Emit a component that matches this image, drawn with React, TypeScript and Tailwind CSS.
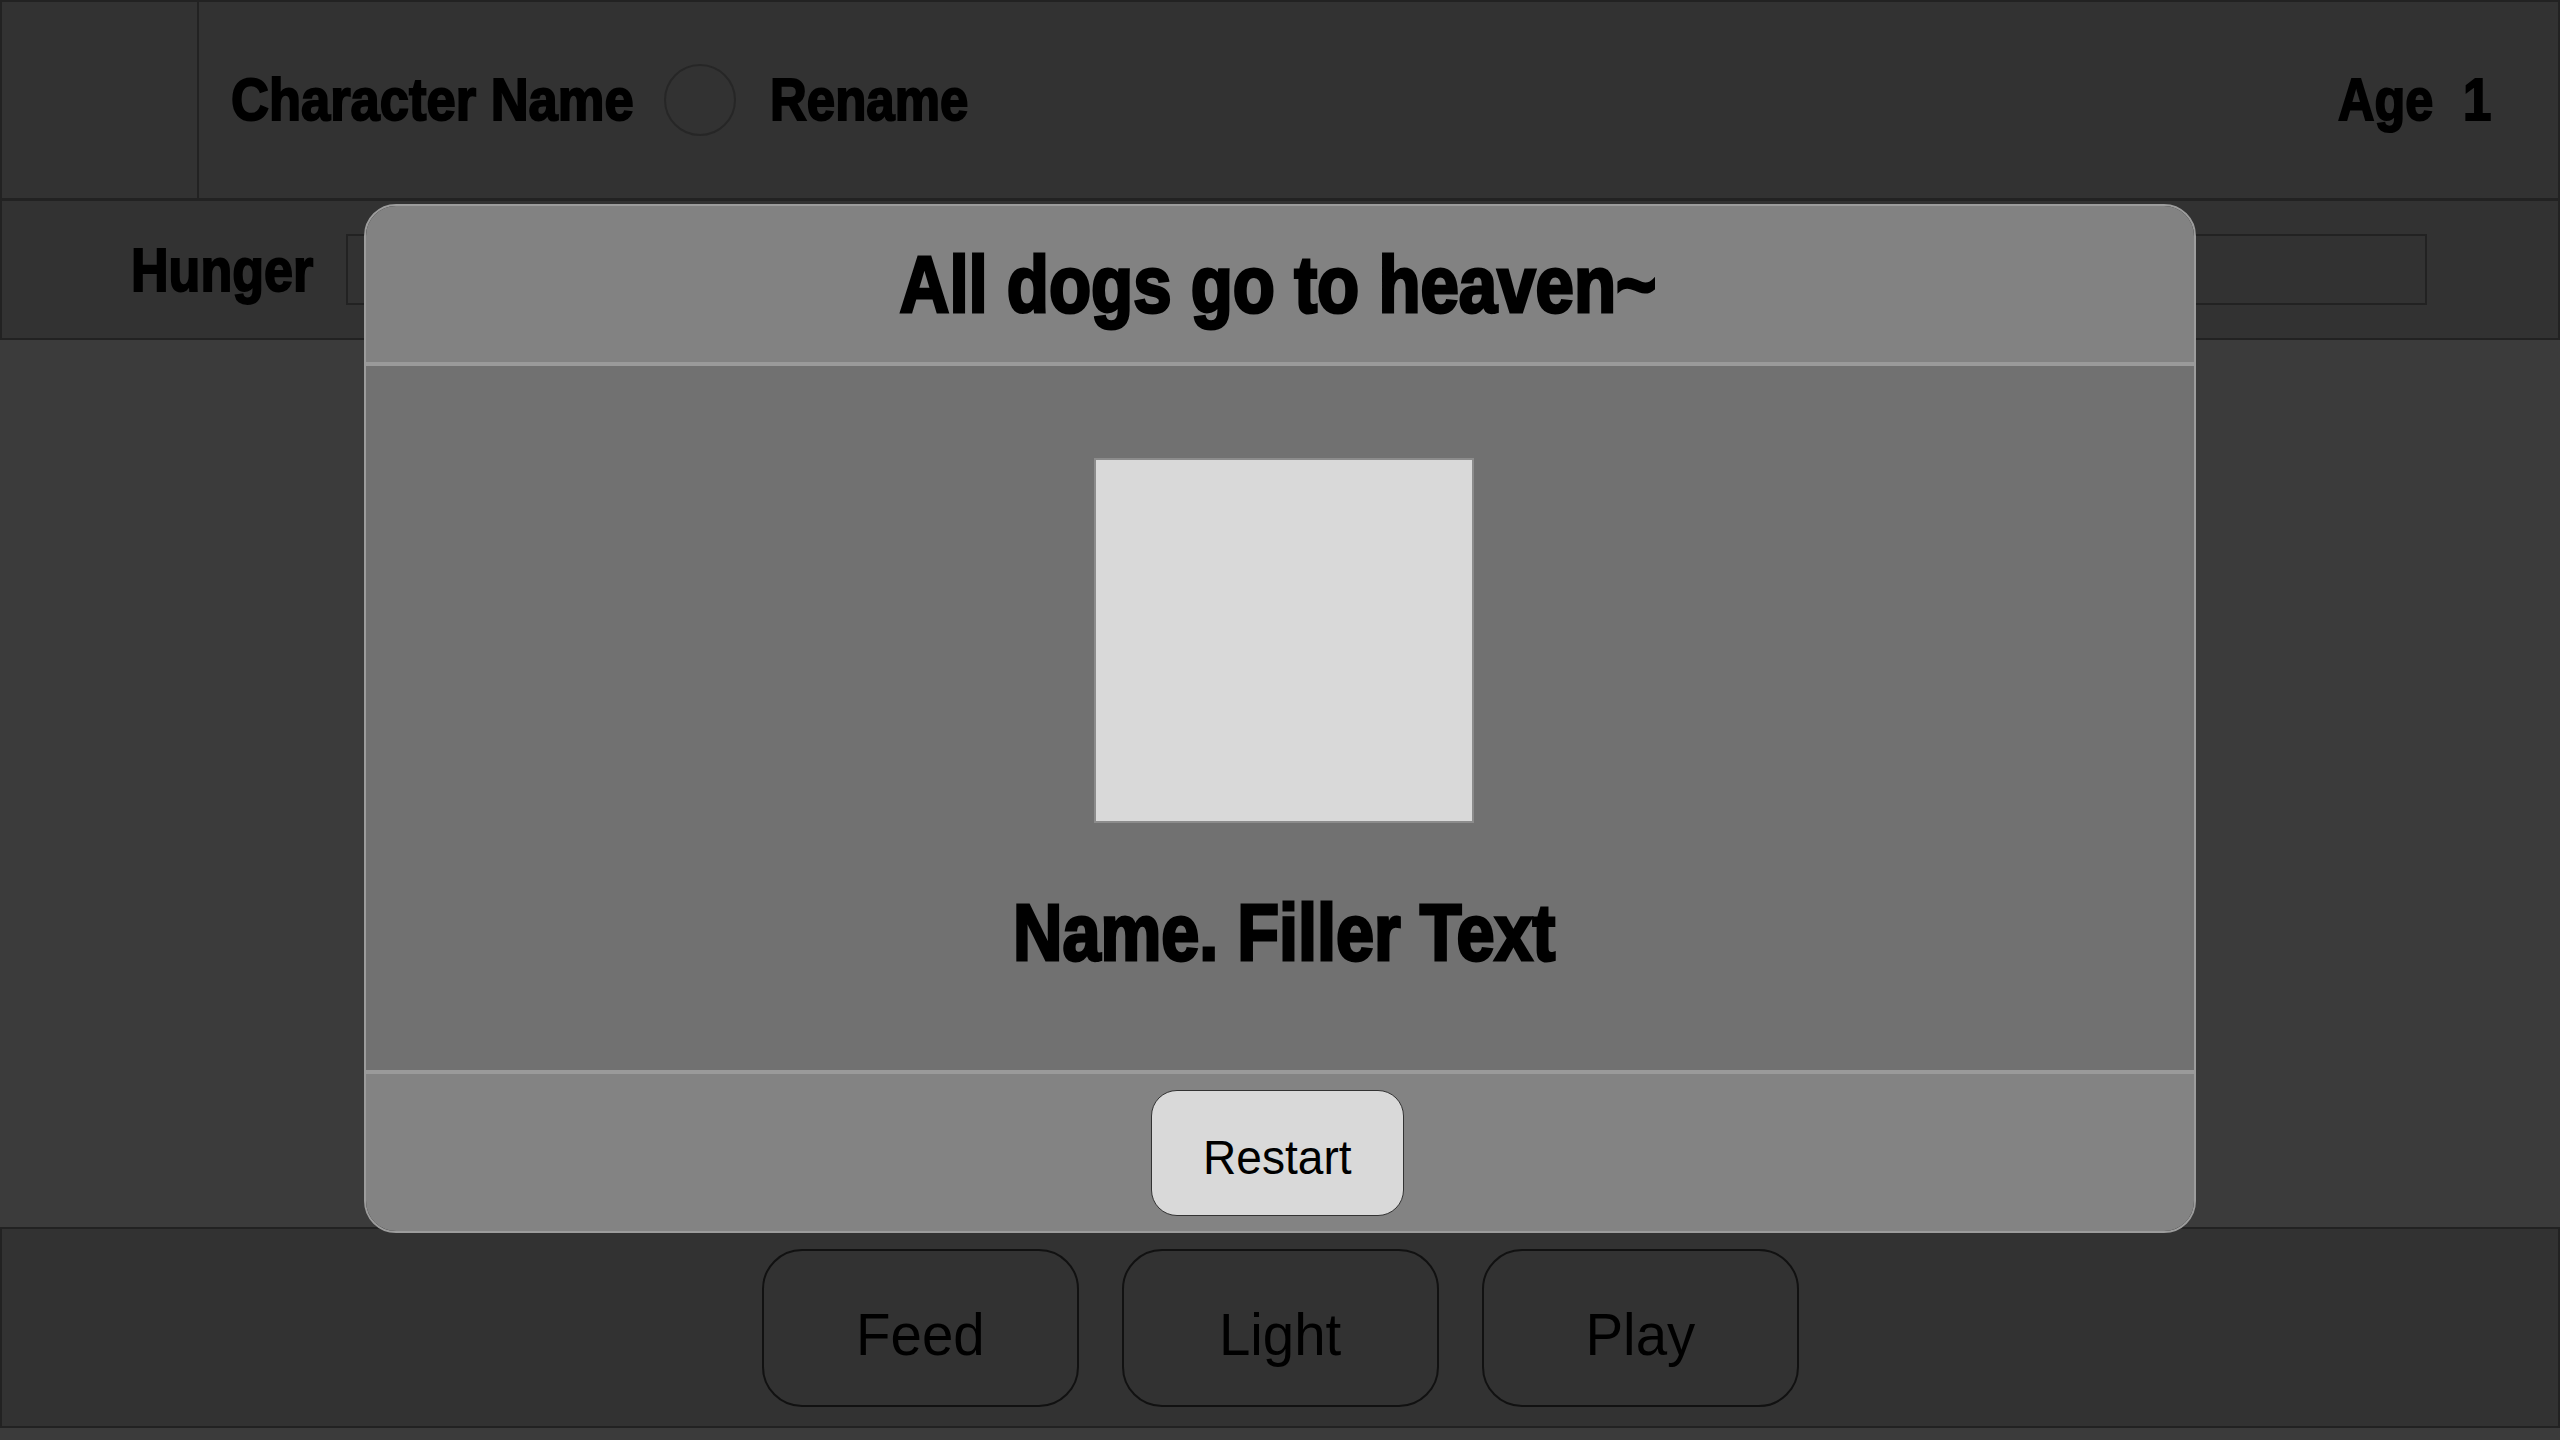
import type { ReactNode } from "react";

const actions = ["Feed", "Light", "Play"];

function Heavy({
  children,
  className,
  squeeze = "scale-x-[0.85]",
}: {
  children: ReactNode;
  className: string;
  squeeze?: string;
}) {
  return (
    <span className={`inline-block whitespace-nowrap overflow-visible ${className}`}>
      <span className={`inline-block origin-left font-bold text-black [-webkit-text-stroke:2px_#000] ${squeeze}`}>
        {children}
      </span>
    </span>
  );
}

export default function App() {
  return (
    <div className="relative flex h-[1440px] w-[2560px] flex-col overflow-hidden bg-[#3b3b3b] font-['Liberation_Sans',Arial,sans-serif]">
      {/* top bar */}
      <header className="flex h-[200px] shrink-0 border-2 border-[#222222] bg-[#323232]">
        <div className="w-[197px] shrink-0 border-r-2 border-[#222222]" />
        <div className="flex flex-1 items-center pl-[32px] pr-[67px]">
          <Heavy className="w-[401px] text-[60px] leading-none" squeeze="scale-x-[0.875]">
            Character Name
          </Heavy>
          <div className="ml-[32px] size-[72px] shrink-0 rounded-full border-2 border-[#262626]" />
          <Heavy className="ml-[34px] w-[202px] text-[60px] leading-none">Rename</Heavy>
          <div className="ml-auto flex items-center">
            <Heavy className="w-[96px] text-[60px] leading-none" squeeze="scale-x-[0.84]">
              Age
            </Heavy>
            <Heavy className="ml-[29px] w-[28px] text-[60px] leading-none">1</Heavy>
          </div>
        </div>
      </header>

      {/* hunger */}
      <div className="flex h-[140px] shrink-0 items-center border-2 border-t border-[#222222] bg-[#323232] pl-[129px] pr-[131px]">
        <Heavy className="w-[182px] text-[62px] leading-none" squeeze="scale-x-[0.84]">
          Hunger
        </Heavy>
        <div className="ml-[33px] h-[71px] flex-1 border-2 border-[#222222]" />
      </div>

      <main className="flex-1" />

      {/* actions */}
      <div className="flex h-[201px] shrink-0 items-center justify-center gap-[43px] border-2 border-[#222222] bg-[#323232]">
        {actions.map((a) => (
          <button
            key={a}
            className="flex h-[158px] w-[317px] items-center justify-center rounded-[40px] border-2 border-[#111111] pt-[14px] text-[60px] leading-none text-black"
          >
            <span className="inline-block scale-x-[0.94]">{a}</span>
          </button>
        ))}
      </div>
      <div className="h-[12px] shrink-0" />

      {/* game over dialog */}
      <div className="absolute inset-0 flex justify-center pt-[204px]">
        <div className="flex h-[1029px] w-[1832px] flex-col overflow-hidden rounded-[32px] border-2 border-[#9c9c9c]">
          <div className="flex h-[160px] shrink-0 items-center justify-center border-b-4 border-[#9a9a9a] bg-[#828282]">
            <h2 className="-ml-[4px] mt-[2px] scale-x-[0.862] text-[80px] font-bold leading-none text-black [-webkit-text-stroke:3px_#000]">
              All dogs go to heaven~
            </h2>
          </div>
          <div className="flex flex-1 flex-col items-center bg-[#717171] pl-[8px] pt-[92px]">
            <div className="h-[365px] w-[380px] border-2 border-[#8c8c8c] bg-[#d9d9d9]" />
            <p className="mt-[70px] scale-x-[0.855] text-[80px] font-bold leading-none text-black [-webkit-text-stroke:3px_#000]">
              Name. Filler Text
            </p>
          </div>
          <div className="flex h-[161px] shrink-0 items-center justify-center border-t-4 border-[#9a9a9a] bg-[#838383]">
            <button className="-ml-[6px] h-[126px] w-[253px] rounded-[26px] border border-[#333333] bg-[#d9d9d9] pt-[10px] text-[48px] leading-none text-black">
              <span className="inline-block scale-x-[0.96]">Restart</span>
            </button>
          </div>
        </div>
      </div>
    </div>
  );
}
